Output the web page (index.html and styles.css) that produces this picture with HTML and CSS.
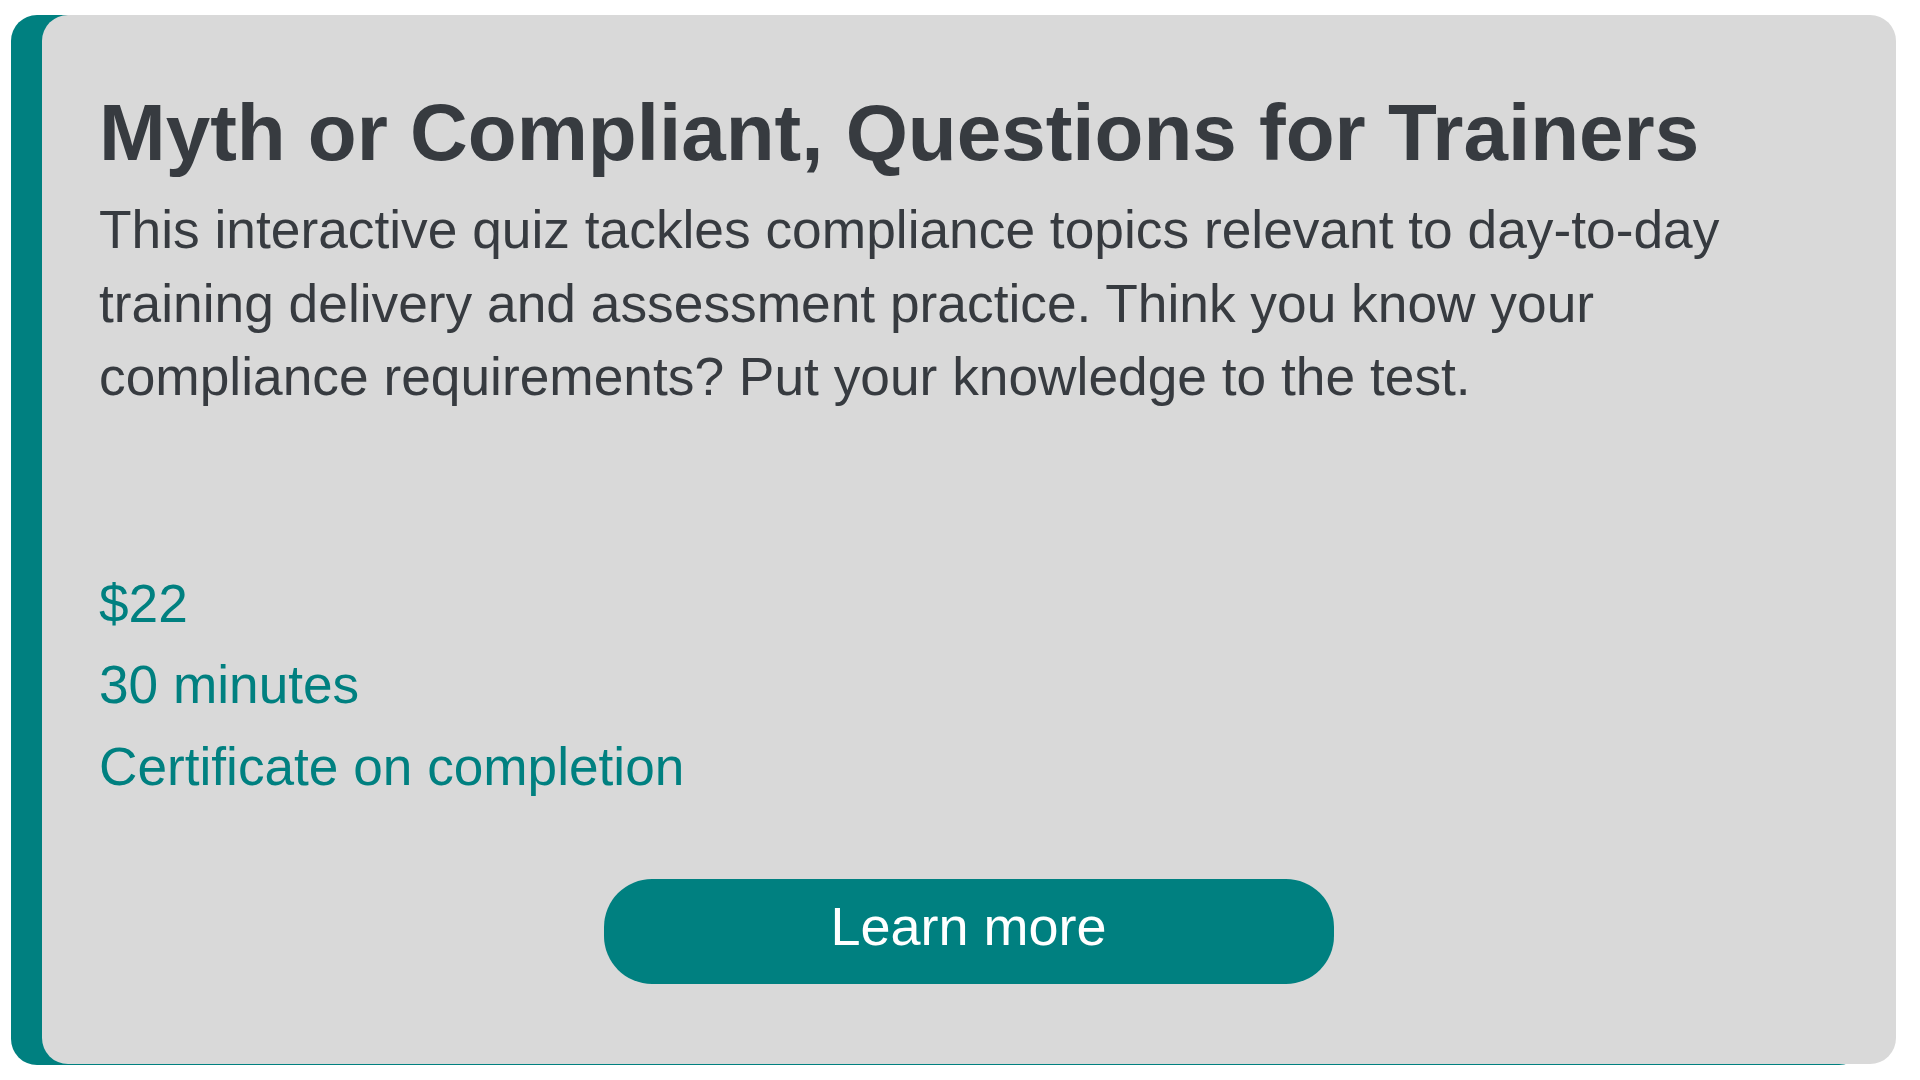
FILE: index.html
```html
<!DOCTYPE html>
<html lang="en">
<head>
<meta charset="utf-8">
<title>Myth or Compliant, Questions for Trainers</title>
<link rel="stylesheet" href="styles.css">
</head>
<body>
<div class="card-wrap">
  <article class="card">
    <h1 class="card-title">Myth or Compliant, Questions for Trainers</h1>
    <p class="card-desc">This interactive quiz tackles compliance topics relevant to day-to-day training delivery and assessment practice. Think you know your compliance requirements? Put your knowledge to the test.</p>
    <ul class="card-meta">
      <li>$22</li>
      <li>30 minutes</li>
      <li>Certificate on completion</li>
    </ul>
    <div class="card-actions">
      <a class="btn" href="#">Learn more</a>
    </div>
  </article>
</div>
</body>
</html>
```
FILE: styles.css
```css
html, body {
  margin: 0;
  padding: 0;
  background: #ffffff;
}

body {
  font-family: "Liberation Sans", Arial, sans-serif;
  width: 1920px;
  height: 1080px;
  overflow: hidden;
}

.card-wrap {
  margin: 15px 0 0 11px;
  width: 1854px;
  height: 1050px;
  box-sizing: border-box;
  padding-left: 31px;
  background: #008080;
  border-radius: 26px;
  display: flex;
}

.card {
  flex: none;
  width: 1854px;
  height: 1049px;
  box-sizing: border-box;
  margin-right: -31px;
  background: #d9d9d9;
  border-radius: 26px;
  padding: 70px 58px 0 57px;
  display: flex;
  flex-direction: column;
}

.card-title {
  margin: 0;
  font-size: 80px;
  line-height: 96px;
  font-weight: 700;
  color: #373b40;
}

.card-desc {
  margin: 12px 0 0 0;
  font-size: 53.3px;
  line-height: 73.5px;
  color: #373b40;
}

.card-meta {
  list-style: none;
  margin: 149px 0 0 0;
  padding: 0;
  font-size: 53.2px;
  line-height: 81.5px;
  color: #008080;
}

.card-actions {
  margin-top: 72px;
  display: flex;
  justify-content: center;
}

.btn {
  width: 730px;
  height: 105px;
  box-sizing: border-box;
  border-radius: 48px;
  background: #008080;
  color: #ffffff;
  text-decoration: none;
  font-size: 54px;
  line-height: 94px;
  text-align: center;
}
```
